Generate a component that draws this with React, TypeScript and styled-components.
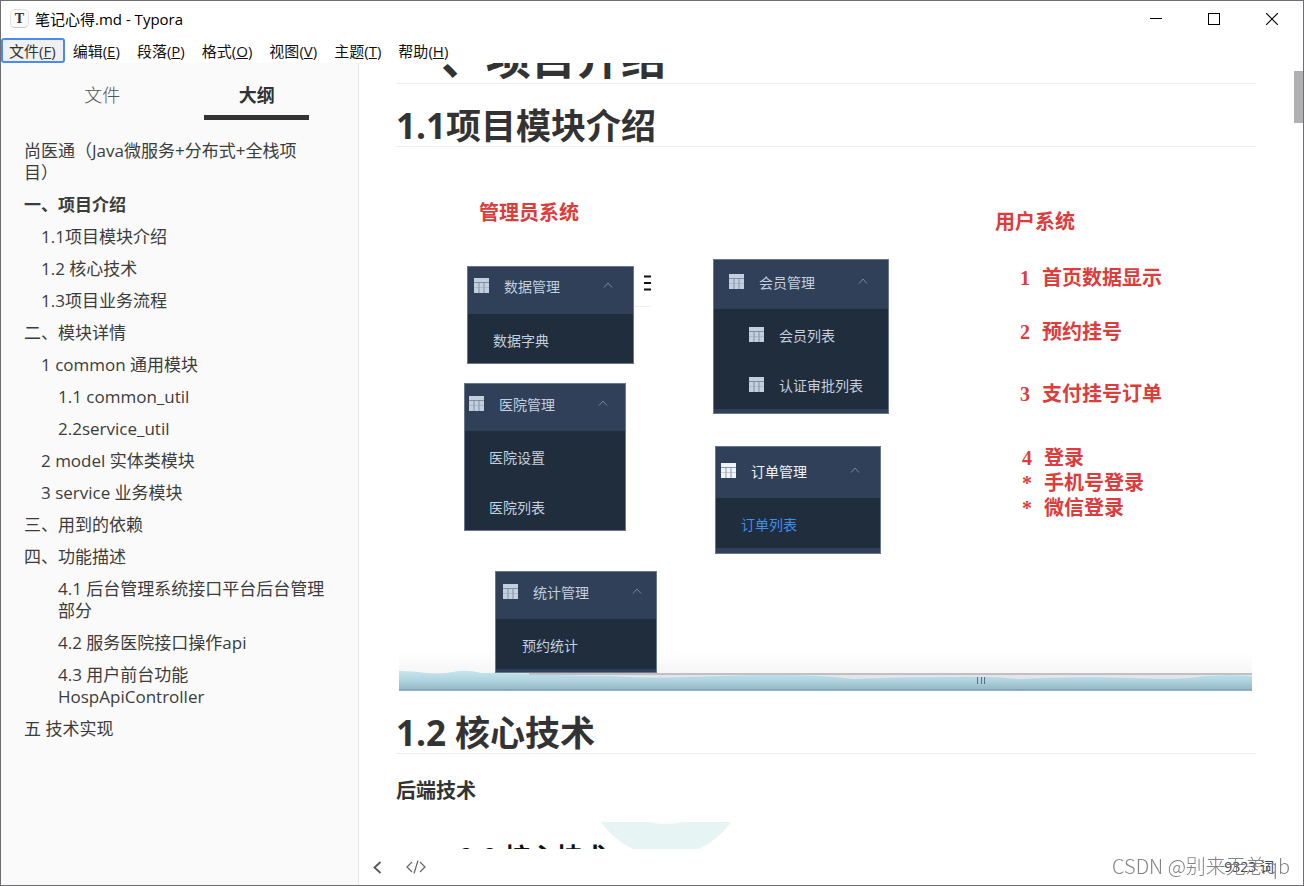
import React from 'react';
import styled, { createGlobalStyle } from 'styled-components';

const uiFont = '"Open Sans", "Noto Sans CJK SC", sans-serif';
const cjkFont = '"Noto Sans CJK SC", sans-serif';
const noteFont = '"Liberation Serif", "Noto Sans CJK SC", serif';

const GlobalStyle = createGlobalStyle`
  * { box-sizing: border-box; }
  body { margin: 0; font-family: ${uiFont}; color: #333; background: #fff; }
  button { font: inherit; color: inherit; background: none; border: 0; padding: 0; cursor: default; }
  h1, h2, h3, p, ul, figure { margin: 0; padding: 0; }
  ul { list-style: none; }
`;

const Frame = styled.div`
  display: flex;
  flex-direction: column;
  height: 100vh;
  border: 1px solid #6e6e70;
  overflow: hidden;
`;

const TitleBar = styled.header`
  display: flex;
  align-items: center;
  height: 35px;
  padding: 0 2px 0 9px;
  flex-shrink: 0;
`;

const AppIcon = styled.span`
  display: flex;
  align-items: center;
  justify-content: center;
  width: 19px;
  height: 19px;
  border: 1px solid #e2e2e2;
  border-bottom-color: #c8c8c8;
  border-radius: 5px;
  background: #fafafa;
  font: bold 14px/16px "Liberation Serif", serif;
  color: #333;
`;

const Title = styled.span`
  flex: 1;
  margin-left: 6px;
  font-size: 15px;
  line-height: 20px;
  color: #000;
`;

const CaptionButton = styled.button`
  display: flex;
  align-items: center;
  justify-content: center;
  width: 58px;
  height: 35px;
`;

const MenuBar = styled.nav`
  display: flex;
  height: 25px;
  margin-top: 2px;
  flex-shrink: 0;
`;

const MenuItem = styled.button<{ $focused?: boolean }>`
  padding: 2px 7px 0 6px;
  border: 2px solid ${p => (p.$focused ? '#4a8af4' : 'transparent')};
  border-radius: 3px;
  background: ${p => (p.$focused ? '#f0f0f0' : 'transparent')};
  font-size: 15px;
  line-height: 19px;
  color: ${p => (p.$focused ? '#333' : '#111')};
  white-space: nowrap;
`;

const Workspace = styled.div`
  display: flex;
  flex: 1;
  min-height: 0;
`;

const Sidebar = styled.aside`
  width: 358px;
  flex-shrink: 0;
  background: #fafafa;
  border-right: 1px solid #e6e6e6;
`;

const Tabs = styled.div`
  display: flex;
  padding: 0 24px;
`;

const Tab = styled.button<{ $active?: boolean }>`
  display: flex;
  flex: 1;
  flex-direction: column;
  align-items: center;
  padding-top: 20px;
  font-size: 18px;
  line-height: 24px;
  font-weight: ${p => (p.$active ? 700 : 300)};
  color: ${p => (p.$active ? '#333' : '#555')};

  &::after {
    content: '';
    width: 105px;
    height: 5px;
    margin-top: 8px;
    background: ${p => (p.$active ? '#333' : 'transparent')};
  }
`;

const Outline = styled.ul`
  display: flex;
  flex-direction: column;
  gap: 10px;
  padding: 20px 29px 0 23px;
`;

const OutlineItem = styled.li<{ $depth: number; $active?: boolean }>`
  padding-left: ${p => p.$depth * 17}px;
  font-size: 17px;
  line-height: 22px;
  font-weight: ${p => (p.$active ? 700 : 400)};
  text-spacing-trim: space-all;

  a { color: #3c3c3c; text-decoration: none; }
`;

const Editor = styled.main`
  display: flex;
  flex: 1;
  flex-direction: column;
  min-width: 0;
`;

const ScrollArea = styled.div`
  display: flex;
  flex: 1;
  min-height: 0;
  overflow: hidden;
`;

const Article = styled.article`
  flex: 1;
  min-width: 0;
  padding: 0 38px 0 37px;
`;

const ScrollTrack = styled.div`
  width: 9px;
  padding-top: 8px;
`;

const ScrollThumb = styled.div`
  height: 52px;
  background: #b0b0b0;
`;

const Chapter = styled.h1`
  margin-top: -30px;
  border-bottom: 1px solid #eee;
  font-size: 45px;
  line-height: 50px;
`;

const Section = styled.h2`
  margin-top: 21px;
  border-bottom: 1px solid #eee;
  font-size: 35px;
  line-height: 41px;
`;

const Subsection = styled.h3`
  margin: 25px 0 19px;
  font-size: 20px;
  line-height: 24px;
`;

const Board = styled.figure`
  position: relative;
  height: 544px;
  margin: 0 4px 0 3px;
  overflow: hidden;
  background: linear-gradient(#fff 505px, #f6f6f6 526px);
`;

const Note = styled.p<{ $x: number; $y: number }>`
  position: absolute;
  left: ${p => p.$x}px;
  top: ${p => p.$y}px;
  display: flex;
  gap: 12px;
  font: bold 20px/24px ${noteFont};
  color: #dd3c3c;
  white-space: nowrap;
`;

const Card = styled.div<{ $x: number; $y: number; $w: number; $h: number }>`
  position: absolute;
  left: ${p => p.$x}px;
  top: ${p => p.$y}px;
  width: ${p => p.$w}px;
  height: ${p => p.$h}px;
  border: 1px solid #69778c;
  background: #304058;
  font: 14px/20px ${cjkFont};
  color: #c3cfdd;
`;

const CardHead = styled.div<{ $h: number; $top: number; $left: number; $right: number; $bright?: boolean }>`
  display: flex;
  align-items: flex-start;
  height: ${p => p.$h}px;
  padding: ${p => p.$top}px ${p => p.$right}px 0 ${p => p.$left}px;
  color: ${p => (p.$bright ? '#f0f3f7' : '#c3cfdd')};
`;

const CardLabel = styled.span`
  flex: 1;
  margin-left: 15px;
`;

const CardBody = styled.div<{ $left: number; $h: number }>`
  height: ${p => p.$h}px;
  padding: 1px 0 0 ${p => p.$left}px;
  background: #202d3d;
`;

const CardRow = styled.div<{ $active?: boolean }>`
  display: flex;
  align-items: flex-start;
  height: 50px;
  padding-top: 15px;
  color: ${p => (p.$active ? '#3d8fe8' : '#c3cfdd')};
`;

const GridSvg = styled.svg`
  width: 15px;
  height: 15px;
  flex-shrink: 0;
  margin-top: 2px;
`;

const ChevronSvg = styled.svg`
  width: 10px;
  height: 6px;
  margin-top: 6px;
`;

const Burger = styled.svg`
  position: absolute;
  left: 235px;
  top: 126px;
  width: 18px;
  height: 36px;
`;

const Wave = styled.svg`
  position: absolute;
  left: 0;
  bottom: 0;
  width: 100%;
  height: 24px;
`;

const Slide = styled.figure`
  position: relative;
  height: 200px;
  margin: 0 4px 0 3px;
`;

const SlideArt = styled.svg`
  display: block;
  width: 400px;
  height: 200px;
`;

const SlideTitle = styled.figcaption`
  position: absolute;
  left: 60px;
  top: 18px;
  font: bold 26px/32px ${cjkFont};
  color: #111;
`;

const Footer = styled.footer`
  display: flex;
  align-items: center;
  gap: 24px;
  height: 36px;
  padding: 0 29px 0 14px;
  flex-shrink: 0;
`;

const FooterButton = styled.button`
  display: flex;
`;

const WordCount = styled.button`
  margin-left: auto;
  font-size: 14px;
  line-height: 20px;
  color: #444;
`;

const Watermark = styled.div`
  position: fixed;
  right: 14px;
  bottom: 6px;
  font: 300 20px/28px ${cjkFont};
  color: #777;
  opacity: 0.9;
  pointer-events: none;
`;

const menus = [
  ['文件', 'F'], ['编辑', 'E'], ['段落', 'P'], ['格式', 'O'],
  ['视图', 'V'], ['主题', 'T'], ['帮助', 'H'],
];

const outline: { text: string; depth: number; active?: boolean }[] = [
  { text: '尚医通（Java微服务+分布式+全栈项目）', depth: 0 },
  { text: '一、项目介绍', depth: 0, active: true },
  { text: '1.1项目模块介绍', depth: 1 },
  { text: '1.2 核心技术', depth: 1 },
  { text: '1.3项目业务流程', depth: 1 },
  { text: '二、模块详情', depth: 0 },
  { text: '1 common 通用模块', depth: 1 },
  { text: '1.1 common_util', depth: 2 },
  { text: '2.2service_util', depth: 2 },
  { text: '2 model 实体类模块', depth: 1 },
  { text: '3 service 业务模块', depth: 1 },
  { text: '三、用到的依赖', depth: 0 },
  { text: '四、功能描述', depth: 0 },
  { text: '4.1 后台管理系统接口平台后台管理部分', depth: 2 },
  { text: '4.2 服务医院接口操作api', depth: 2 },
  { text: '4.3 用户前台功能HospApiController', depth: 2 },
  { text: '五 技术实现', depth: 0 },
];

const cards = [
  { x: 68, y: 119, w: 167, h: 98, head: 47, top: 9, left: 6, right: 20, title: '数据管理', rowLeft: 25, body: 49, rows: ['数据字典'] },
  { x: 65, y: 236, w: 162, h: 148, head: 47, top: 10, left: 4, right: 17, title: '医院管理', rowLeft: 24, body: 99, rows: ['医院设置', '医院列表'] },
  { x: 314, y: 112, w: 176, h: 155, head: 49, top: 12, left: 15, right: 20, title: '会员管理', rowLeft: 35, body: 100, rows: ['会员列表', '认证审批列表'], rowIcons: true },
  { x: 316, y: 299, w: 166, h: 108, head: 51, top: 14, left: 5, right: 20, title: '订单管理', rowLeft: 25, body: 50, rows: ['订单列表'], bright: true },
  { x: 96, y: 424, w: 162, h: 102, head: 47, top: 10, left: 7, right: 14, title: '统计管理', rowLeft: 26, body: 50, rows: ['预约统计'] },
];

const notes: { x: number; y: number; mark?: string; text: string }[] = [
  { x: 80, y: 54, text: '管理员系统' },
  { x: 596, y: 63, text: '用户系统' },
  { x: 621, y: 119, mark: '1', text: '首页数据显示' },
  { x: 621, y: 173, mark: '2', text: '预约挂号' },
  { x: 621, y: 235, mark: '3', text: '支付挂号订单' },
  { x: 623, y: 299, mark: '4', text: '登录' },
  { x: 623, y: 324, mark: '*', text: '手机号登录' },
  { x: 623, y: 349, mark: '*', text: '微信登录' },
];

const GridIcon = () => (
  <GridSvg viewBox="0 0 15 15" aria-hidden="true">
    <rect width="15" height="15" fill="currentColor" />
    <path d="M0 4.5H15M5 4.5V15M10 4.5V15" stroke="#71809a" fill="none" opacity="0.8" />
    <path d="M0 9.5H15" stroke="#8d9aae" fill="none" opacity="0.4" />
  </GridSvg>
);

const ChevronUp = () => (
  <ChevronSvg viewBox="0 0 10 6" aria-hidden="true">
    <path d="M1 5.5L5 1L9 5.5" fill="none" stroke="#77869a" />
  </ChevronSvg>
);

export default function App() {
  return (
    <>
      <GlobalStyle />
      <Frame>
        <TitleBar>
          <AppIcon>T</AppIcon>
          <Title>笔记心得.md - Typora</Title>
          <CaptionButton aria-label="最小化">
            <svg width="12" height="12" viewBox="0 0 12 12"><path d="M0 5.5H12" stroke="#000" /></svg>
          </CaptionButton>
          <CaptionButton aria-label="最大化">
            <svg width="12" height="12" viewBox="0 0 12 12"><rect x=".5" y=".5" width="11" height="11" fill="none" stroke="#000" /></svg>
          </CaptionButton>
          <CaptionButton aria-label="关闭">
            <svg width="12" height="12" viewBox="0 0 12 12"><path d="M0 0L12 12M12 0L0 12" stroke="#000" strokeWidth="1.2" /></svg>
          </CaptionButton>
        </TitleBar>
        <MenuBar>
          {menus.map(([label, key], i) => (
            <MenuItem key={key} $focused={i === 0}>{label}(<u>{key}</u>)</MenuItem>
          ))}
        </MenuBar>
        <Workspace>
          <Sidebar>
            <Tabs>
              <Tab>文件</Tab>
              <Tab $active>大纲</Tab>
            </Tabs>
            <Outline>
              {outline.map(item => (
                <OutlineItem key={item.text} $depth={item.depth} $active={item.active}>
                  <a href="#outline">{item.text}</a>
                </OutlineItem>
              ))}
            </Outline>
          </Sidebar>
          <Editor>
            <ScrollArea>
              <Article>
                <Chapter>一、项目介绍</Chapter>
                <Section>1.1项目模块介绍</Section>
                <Board>
                  {notes.map(n => (
                    <Note key={n.text} $x={n.x} $y={n.y}>
                      {n.mark && <span>{n.mark}</span>}
                      <span>{n.text}</span>
                    </Note>
                  ))}
                  {cards.map(c => (
                    <Card key={c.title} $x={c.x} $y={c.y} $w={c.w} $h={c.h}>
                      <CardHead $h={c.head} $top={c.top} $left={c.left} $right={c.right} $bright={c.bright}>
                        <GridIcon />
                        <CardLabel>{c.title}</CardLabel>
                        <ChevronUp />
                      </CardHead>
                      <CardBody $left={c.rowLeft} $h={c.body}>
                        {c.rows.map(r => (
                          <CardRow key={r} $active={c.bright}>
                            {c.rowIcons ? <><GridIcon /><CardLabel>{r}</CardLabel></> : r}
                          </CardRow>
                        ))}
                      </CardBody>
                    </Card>
                  ))}
                  <Burger viewBox="0 0 18 36" aria-hidden="true">
                    <path d="M10 3.5H17M10 10H17M10 16.5H17" stroke="#111" strokeWidth="2" />
                    <path d="M0 33.5H17" stroke="#eee" />
                  </Burger>
                  <Wave viewBox="0 0 853 24" preserveAspectRatio="none" aria-hidden="true">
                    <defs>
                      <linearGradient id="water" x1="0" y1="0" x2="0" y2="1">
                        <stop offset="0" stopColor="#c3e6f0" />
                        <stop offset="0.45" stopColor="#b2d5e1" />
                        <stop offset="1" stopColor="#8fb4c1" />
                      </linearGradient>
                    </defs>
                    <rect y="6" width="853" height="18" fill="#e3e5e8" />
                    <path d="M0 4Q14 4 27 6T54 5T82 6Q108 6 135 7Q170 9 210 9Q250 12 290 10Q340 8 380 8Q420 8 455 12Q500 10 560 10Q590 9 620 12Q680 9 730 11T800 10Q820 7 853 9V24H0Z" fill="url(#water)" />
                    <path d="M130 7H853" stroke="#bfc0c3" strokeWidth="2" />
                    <path d="M0 22.500H853" stroke="#82a9b7" />
                    <path d="M578.500 10V17M582.500 10V17M585.500 10V17" stroke="#55717d" />
                  </Wave>
                </Board>
                <Section>1.2 核心技术</Section>
                <Subsection>后端技术</Subsection>
                <Slide>
                  <SlideArt viewBox="0 0 400 200" aria-hidden="true">
                    <circle cx="267" cy="-45" r="79" fill="#e6f4f4" />
                    <ellipse cx="267" cy="-6" rx="26" ry="8" fill="#fcfcfc" />
                  </SlideArt>
                  <SlideTitle>2.2 核心技术</SlideTitle>
                </Slide>
              </Article>
              <ScrollTrack><ScrollThumb /></ScrollTrack>
            </ScrollArea>
            <Footer>
              <FooterButton aria-label="收起侧边栏">
                <svg width="9" height="13" viewBox="0 0 9 13"><path d="M7.500 1L1.500 6.500L7.500 12" fill="none" stroke="#555" strokeWidth="1.800" /></svg>
              </FooterButton>
              <FooterButton aria-label="源代码模式">
                <svg width="20" height="14" viewBox="0 0 20 14"><path d="M6 2L1 7L6 12M14 2L19 7L14 12M12 .5L8 13.500" fill="none" stroke="#666" strokeWidth="1.200" /></svg>
              </FooterButton>
              <WordCount>9323 词</WordCount>
            </Footer>
          </Editor>
        </Workspace>
      </Frame>
      <Watermark>CSDN @别来无恙qb</Watermark>
    </>
  );
}
